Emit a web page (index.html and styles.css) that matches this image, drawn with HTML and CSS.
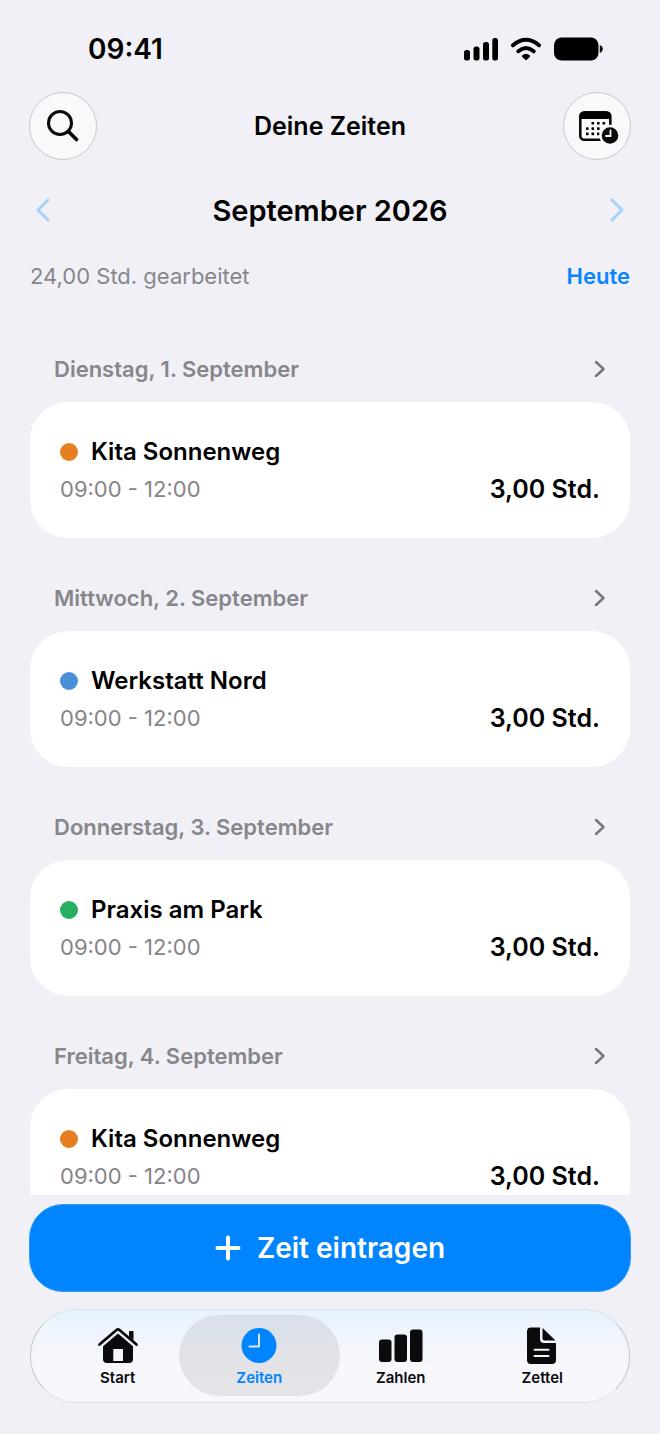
FILE: index.html
```html
<!DOCTYPE html>
<html lang="de">
<head>
<meta charset="utf-8">
<meta name="viewport" content="width=device-width, initial-scale=1">
<title>Deine Zeiten</title>
<link rel="stylesheet" href="styles.css">
</head>
<body>
<div class="app">
  <div class="status">
    <span class="status-time">09:41</span>
    <div class="status-icons">
      <svg width="34" height="24" viewBox="0 0 34 24" aria-hidden="true"><rect x="0" y="13" width="6" height="10.500" rx="2.500"/><rect x="9.500" y="9.500" width="6" height="14" rx="2.500"/><rect x="19" y="5" width="6" height="18.500" rx="2.500"/><rect x="28.300" y="1" width="5.700" height="22.500" rx="2.500"/></svg>
      <svg width="32" height="24" viewBox="0 0 32 24" aria-hidden="true"><g fill="none" stroke="#000" stroke-width="4" stroke-linecap="round"><path d="M3 8.200Q16-2.600 29 8.200"/><path d="M8.300 14.200Q16 7.800 23.700 14.200"/></g><path d="M12 18.500Q16 15 20 18.500Q20.500 19.500 19.500 20.300L16.800 22.800Q16 23.500 15.200 22.800L12.500 20.300Q11.500 19.500 12 18.500Z"/></svg>
      <svg width="49" height="24" viewBox="0 0 49 24" aria-hidden="true"><rect x="0" y="0.500" width="44.500" height="23" rx="7.500"/><path d="M45.800 8.300Q48.800 9.200 48.800 12T45.800 15.700Z"/></svg>
    </div>
  </div>

  <header class="navbar">
    <button class="round" type="button" aria-label="Suchen">
      <svg width="34" height="34" viewBox="0 0 34 34" aria-hidden="true"><g fill="none" stroke="#0b0b0d" stroke-linecap="round"><circle cx="14" cy="14" r="11.500" stroke-width="3"/><path d="M23 23L30.500 30.500" stroke-width="3.800"/></g></svg>
    </button>
    <h1 class="title">Deine Zeiten</h1>
    <button class="round" type="button" aria-label="Kalender">
      <svg class="calendar" width="40" height="34" viewBox="0 0 40 34" aria-hidden="true"><rect x="1.300" y="1.300" width="30" height="27.500" rx="4" fill="none" stroke="#0b0b0d" stroke-width="2.600"/><path d="M1 8V5Q1 1 5 1H28Q32 1 32 5V8Z"/><g><rect x="12.500" y="11" width="2.600" height="2.600" rx=".6"/><rect x="18" y="11" width="2.600" height="2.600" rx=".6"/><rect x="23.500" y="11" width="2.600" height="2.600" rx=".6"/><rect x="7" y="16.300" width="2.600" height="2.600" rx=".6"/><rect x="12.500" y="16.300" width="2.600" height="2.600" rx=".6"/><rect x="18" y="16.300" width="2.600" height="2.600" rx=".6"/><rect x="7" y="21.600" width="2.600" height="2.600" rx=".6"/><rect x="12.500" y="21.600" width="2.600" height="2.600" rx=".6"/><rect x="18" y="21.600" width="2.600" height="2.600" rx=".6"/></g><circle cx="31" cy="24.500" r="9.500" fill="#0b0b0d" stroke="#f9f9fc" stroke-width="2.400"/><path d="M31.500 19.500V25H27" fill="none" stroke="#f9f9fc" stroke-width="1.800" stroke-linecap="round"/></svg>
    </button>
  </header>

  <div class="month">
    <button class="step" type="button" aria-label="Vorheriger Monat"><svg width="16" height="24" viewBox="0 0 16 24" aria-hidden="true"><path d="M13 2L3 12L13 22"/></svg></button>
    <h2 class="month-name">September 2026</h2>
    <button class="step" type="button" aria-label="Nächster Monat"><svg width="16" height="24" viewBox="0 0 16 24" aria-hidden="true"><path d="M3 2L13 12L3 22"/></svg></button>
  </div>

  <div class="summary">
    <span>24,00 Std. gearbeitet</span>
    <button class="today" type="button">Heute</button>
  </div>

  <main class="list">
    <section class="day">
      <button class="day-head" type="button"><span>Dienstag, 1. September</span><svg width="12" height="18" viewBox="0 0 12 18" aria-hidden="true"><path d="M2 2L9.500 9L2 16"/></svg></button>
      <article class="card">
        <h3 class="job"><i class="dot orange"></i>Kita Sonnenweg</h3>
        <div class="row"><span class="range">09:00 - 12:00</span><strong class="hours">3,00 Std.</strong></div>
      </article>
    </section>
    <section class="day">
      <button class="day-head" type="button"><span>Mittwoch, 2. September</span><svg width="12" height="18" viewBox="0 0 12 18" aria-hidden="true"><path d="M2 2L9.500 9L2 16"/></svg></button>
      <article class="card">
        <h3 class="job"><i class="dot blue"></i>Werkstatt Nord</h3>
        <div class="row"><span class="range">09:00 - 12:00</span><strong class="hours">3,00 Std.</strong></div>
      </article>
    </section>
    <section class="day">
      <button class="day-head" type="button"><span>Donnerstag, 3. September</span><svg width="12" height="18" viewBox="0 0 12 18" aria-hidden="true"><path d="M2 2L9.500 9L2 16"/></svg></button>
      <article class="card">
        <h3 class="job"><i class="dot green"></i>Praxis am Park</h3>
        <div class="row"><span class="range">09:00 - 12:00</span><strong class="hours">3,00 Std.</strong></div>
      </article>
    </section>
    <section class="day">
      <button class="day-head" type="button"><span>Freitag, 4. September</span><svg width="12" height="18" viewBox="0 0 12 18" aria-hidden="true"><path d="M2 2L9.500 9L2 16"/></svg></button>
      <article class="card">
        <h3 class="job"><i class="dot orange"></i>Kita Sonnenweg</h3>
        <div class="row"><span class="range">09:00 - 12:00</span><strong class="hours">3,00 Std.</strong></div>
      </article>
    </section>
  </main>

  <footer class="bottom">
    <button class="add" type="button">
      <svg width="26" height="26" viewBox="0 0 26 26" aria-hidden="true"><path d="M13 2.500V23.500M2.500 13H23.500"/></svg>
      <span>Zeit eintragen</span>
    </button>
    <nav class="tabs">
      <a class="tab" href="#start">
        <svg width="42" height="38" viewBox="0 0 42 38" aria-hidden="true"><path d="M2.500 17.500L19.500 3Q21 1.800 22.500 3L39.500 17.500" fill="none" stroke="#0b0b0d" stroke-width="2.800" stroke-linecap="round"/><path d="M32 4.500Q32 4 32.500 4H36Q36.500 4 36.500 4.500V13.500L32 9.600Z"/><path fill-rule="evenodd" d="M21 6.500L36 19.200V32Q36 36 32 36H10Q6 36 6 32V19.200ZM16.300 22.500V34H26V22.500Q26 22 25.500 22H16.800Q16.300 22 16.300 22.500Z"/></svg>
        <span>Start</span>
      </a>
      <a class="tab active" href="#zeiten" aria-current="page">
        <svg width="42" height="38" viewBox="0 0 42 38" aria-hidden="true"><circle cx="21" cy="18.500" r="17.500"/><path d="M21 7.500V19.500H11.500" fill="none" stroke="#dfe5ef" stroke-width="2" stroke-linecap="round" stroke-linejoin="round"/></svg>
        <span>Zeiten</span>
      </a>
      <a class="tab" href="#zahlen">
        <svg width="44" height="38" viewBox="0 0 44 38" aria-hidden="true"><rect x="0" y="12.500" width="12.500" height="22.500" rx="3"/><rect x="15.500" y="7.500" width="12.500" height="27.500" rx="3"/><rect x="31" y="2.500" width="12.500" height="32.500" rx="3"/></svg>
        <span>Zahlen</span>
      </a>
      <a class="tab" href="#zettel">
        <svg width="42" height="38" viewBox="0 0 42 38" aria-hidden="true"><path d="M10 .5H19V12Q19 16 23 16H35V33Q35 37 31 37H10Q6 37 6 33V4.500Q6 .5 10 .5Z"/><path d="M21.500 1L34.500 13.500H23.500Q21.500 13.500 21.500 11.500Z"/><path d="M13.500 22.700H27.500M13.500 29H27.500" stroke="#f3f5fc" stroke-width="2" stroke-linecap="round"/></svg>
        <span>Zettel</span>
      </a>
    </nav>
  </footer>
</div>
</body>
</html>
```
FILE: styles.css
```css
* {
  box-sizing: border-box;
}

body {
  margin: 0;
  background: #f1f0f6;
  color: #000;
  font-family: Inter, "Liberation Sans", sans-serif;
}

h1, h2, h3 {
  margin: 0;
}

button {
  margin: 0;
  padding: 0;
  border: 0;
  background: none;
  color: inherit;
  font: inherit;
  cursor: pointer;
}

svg {
  display: block;
  flex: none;
}

.app {
  display: flex;
  flex-direction: column;
  height: 100vh;
  padding: 0 30px;
}

.status {
  display: flex;
  align-items: center;
  justify-content: space-between;
  height: 92px;
  padding: 5px 27px 0 58px;
}

.status-time {
  font-size: 28px;
  font-weight: 600;
}

.status-icons {
  display: flex;
  gap: 12px;
}

.navbar {
  display: flex;
  align-items: center;
  justify-content: space-between;
  margin: 0 -1px;
}

.round {
  display: grid;
  place-items: center;
  width: 68px;
  height: 68px;
  border: 1px solid #c9c8ce;
  border-radius: 50%;
  background: #f9f9fc;
}

.calendar {
  margin: 4px 0 0 4px;
}

.title {
  font-size: 25px;
  font-weight: 600;
}

.month {
  display: flex;
  align-items: center;
  justify-content: space-between;
  height: 40px;
  margin-top: 30px;
  padding: 0 5px;
}

.month-name {
  font-size: 29px;
  font-weight: 600;
}

.step svg {
  fill: none;
  stroke: #a6d2fb;
  stroke-width: 3;
  stroke-linecap: round;
  stroke-linejoin: round;
}

.summary {
  display: flex;
  align-items: center;
  justify-content: space-between;
  height: 32px;
  margin: 30px 0 17px;
  color: #87868b;
  font-size: 22px;
}

.today {
  color: #0a84ff;
  font-weight: 600;
}

.list {
  flex: 1 1 0;
  min-height: 0;
  overflow: hidden;
}

.day-head {
  display: flex;
  align-items: center;
  justify-content: space-between;
  width: 100%;
  padding: 44px 24px 17px;
  color: #87868b;
  font-size: 22px;
  font-weight: 600;
  line-height: 32px;
}

.day-head svg {
  fill: none;
  stroke: #77767b;
  stroke-width: 2.5;
  stroke-linecap: round;
  stroke-linejoin: round;
}

.card {
  padding: 32px 30px 30px;
  border-radius: 38px;
  background: #fff;
}

.job {
  display: flex;
  align-items: center;
  gap: 13px;
  font-size: 24px;
  font-weight: 600;
  line-height: 36px;
}

.dot {
  width: 18px;
  height: 18px;
  border-radius: 50%;
}

.orange {
  background: #e67e22;
}

.blue {
  background: #4a90d9;
}

.green {
  background: #27ae60;
}

.row {
  display: flex;
  align-items: center;
  justify-content: space-between;
  line-height: 38px;
}

.range {
  color: #858489;
  font-size: 22px;
}

.hours {
  font-size: 25px;
  font-weight: 600;
}

.bottom {
  margin: 0 -1px;
  padding: 9px 0 31px;
}

.add {
  display: flex;
  align-items: center;
  justify-content: center;
  gap: 16px;
  width: 100%;
  height: 88px;
  border: 1px solid #2f9cf5;
  border-radius: 34px;
  background: #0085ff;
  color: #fff;
  font-size: 28px;
  font-weight: 600;
}

.add svg {
  fill: none;
  stroke: #fff;
  stroke-width: 4;
  stroke-linecap: round;
}

.tabs {
  display: grid;
  grid-template-columns: repeat(4, 1fr);
  margin: 17px 1px 0;
  padding: 5px 16px 6px;
  border: 1px solid #c6c8cd;
  border-top-color: #cfe6ea;
  border-bottom-color: #e2e1e6;
  border-radius: 47px;
  background: linear-gradient(#e8f3fd, #f2f5fd 35%, #f8f8fc 65%);
}

.tab {
  display: flex;
  flex-direction: column;
  align-items: center;
  gap: 1px;
  height: 81px;
  padding-top: 12px;
  color: #0b0b0d;
  font-size: 15px;
  font-weight: 600;
  line-height: 24px;
  text-decoration: none;
}

.tab svg {
  fill: #0b0b0d;
}

.active {
  margin: 0 -10px;
  border-radius: 41px;
  background: linear-gradient(#d8e1eb, #e1e2e7 50%, #e4e3e8);
  color: #0085ff;
}

.active svg {
  fill: #0085ff;
}
```
